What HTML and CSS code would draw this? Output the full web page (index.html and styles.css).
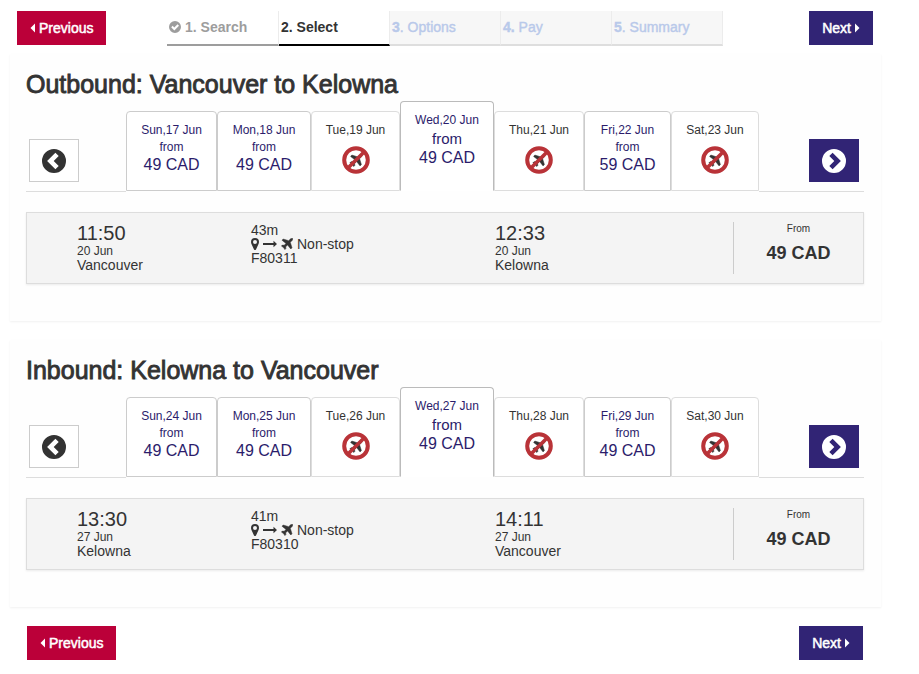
FILE: index.html
```html
<!DOCTYPE html>
<html lang="en">
<head>
<meta charset="utf-8">
<meta name="viewport" content="width=device-width, initial-scale=1">
<title>Select flights</title>
<link rel="stylesheet" href="styles.css">
</head>
<body>
<svg class="sprite" aria-hidden="true">
  <symbol id="caret-left" viewBox="0 0 5 10"><path d="M5 0.5V9.5L0.5 5z"/></symbol>
  <symbol id="caret-right" viewBox="0 0 5 10"><path d="M0 0.5V9.5L4.5 5z"/></symbol>
  <symbol id="check" viewBox="0 0 12 12"><path fill-rule="evenodd" d="M6 0a6 6 0 1 1 0 12A6 6 0 0 1 6 0zM2.2 6.3l3.1 3.1 4.7-4.7-1.5-1.5-3.2 3.2-1.6-1.6z"/></symbol>
  <symbol id="chevron-left" viewBox="0 0 24 24"><path fill-rule="evenodd" d="M12 0a12 12 0 1 1 0 24A12 12 0 0 1 12 0zM5.1 12l8.300 8.300 3.300-3.300-5-5 5-5-3.300-3.300z"/></symbol>
  <symbol id="chevron-right" viewBox="0 0 24 24"><path fill-rule="evenodd" d="M12 0a12 12 0 1 1 0 24A12 12 0 0 1 12 0zM18.900 12l-8.300 8.300-3.300-3.300 5-5-5-5 3.300-3.300z"/></symbol>
  <symbol id="plane" viewBox="0 0 12 12"><path stroke="currentColor" stroke-width=".5" stroke-linejoin="round" d="M11.600.4c.4.6 0 1.600-.7 2.300L9.300 4.300 11 9.800 9.800 11 6.600 7 4.700 8.800l.2 1.800-1 1-1.400-2.100L.4 8.100l1-1 1.800.2L5 5.400 1 2.200 2.200 1l5.500 1.700L9.300 1.100C10 .4 11 0 11.600.4z"/></symbol>
  <symbol id="pin" viewBox="0 0 8 12"><path fill-rule="evenodd" d="M4 0a4 4 0 0 1 4 4c0 1-.3 1.700-.7 2.500L5 11.500q-1 1-2 0L.7 6.500C.3 5.700 0 5 0 4a4 4 0 0 1 4-4zM4 2a2 2 0 1 0 0 4 2 2 0 0 0 0-4z"/></symbol>
  <symbol id="arrow" viewBox="0 0 14 8"><path d="M0 3.100h10.500V.8l3.500 3.200-3.500 3.200V4.900H0z"/></symbol>
  <symbol id="no-flight" viewBox="0 0 28 28">
    <path fill="#333" stroke="#333" stroke-width=".5" transform="translate(7.500 8) scale(1.080)" d="M11.600.4c.4.6 0 1.600-.7 2.300L9.300 4.300 11 9.800 9.800 11 6.600 7 4.700 8.800l.2 1.800-1 1-1.400-2.100L.4 8.100l1-1 1.800.2L5 5.400 1 2.200 2.200 1l5.500 1.700L9.300 1.100C10 .4 11 0 11.600.4z"/>
    <circle cx="14" cy="14" r="11.800" fill="none" stroke="#b93338" stroke-width="4"/>
    <path d="M5.700 22.300L22.300 5.700" stroke="#b93338" stroke-width="3.600"/>
  </symbol>
</svg>

<div class="page">
  <header class="topbar">
    <div><button class="btn btn-prev" type="button"><svg class="caret"><use href="#caret-left"/></svg>Previous</button></div>
    <ol class="steps">
      <li class="step done"><svg class="tick"><use href="#check"/></svg>1. Search</li>
      <li class="step current" aria-current="step">2. Select</li>
      <li class="step"><b>3</b>. Options</li>
      <li class="step"><b>4.</b> Pay</li>
      <li class="step"><b>5</b>. Summary</li>
    </ol>
    <div class="end"><button class="btn btn-next" type="button">Next<svg class="caret"><use href="#caret-right"/></svg></button></div>
  </header>

  <main>
    <section class="leg">
      <h2>Outbound: Vancouver to Kelowna</h2>
      <div class="dates">
        <div class="side"><button class="arrow-btn" type="button" aria-label="Earlier dates"><svg><use href="#chevron-left"/></svg></button></div>
        <div class="tabs">
          <button class="tab" type="button"><span>Sun,17 Jun</span><span class="from">from</span><span class="fare">49 CAD</span></button>
          <button class="tab" type="button"><span>Mon,18 Jun</span><span class="from">from</span><span class="fare">49 CAD</span></button>
          <button class="tab none" type="button"><span>Tue,19 Jun</span><svg><use href="#no-flight"/></svg></button>
          <button class="tab selected" type="button"><span>Wed,20 Jun</span><span class="from">from</span><span class="fare">49 CAD</span></button>
          <button class="tab none" type="button"><span>Thu,21 Jun</span><svg><use href="#no-flight"/></svg></button>
          <button class="tab" type="button"><span>Fri,22 Jun</span><span class="from">from</span><span class="fare">59 CAD</span></button>
          <button class="tab none" type="button"><span>Sat,23 Jun</span><svg><use href="#no-flight"/></svg></button>
        </div>
        <div class="side end"><button class="arrow-btn later" type="button" aria-label="Later dates"><svg><use href="#chevron-right"/></svg></button></div>
      </div>
      <article class="flight">
        <div class="stop"><div class="time">11:50</div><div class="day">20 Jun</div><div>Vancouver</div></div>
        <div class="info"><div>43m</div><div class="route"><svg class="pin"><use href="#pin"/></svg><svg class="arrow"><use href="#arrow"/></svg><svg class="plane"><use href="#plane"/></svg>Non-stop</div><div>F80311</div></div>
        <div class="stop"><div class="time">12:33</div><div class="day">20 Jun</div><div>Kelowna</div></div>
        <div class="price"><span>From</span><strong>49 CAD</strong></div>
      </article>
    </section>

    <section class="leg">
      <h2>Inbound: Kelowna to Vancouver</h2>
      <div class="dates">
        <div class="side"><button class="arrow-btn" type="button" aria-label="Earlier dates"><svg><use href="#chevron-left"/></svg></button></div>
        <div class="tabs">
          <button class="tab" type="button"><span>Sun,24 Jun</span><span class="from">from</span><span class="fare">49 CAD</span></button>
          <button class="tab" type="button"><span>Mon,25 Jun</span><span class="from">from</span><span class="fare">49 CAD</span></button>
          <button class="tab none" type="button"><span>Tue,26 Jun</span><svg><use href="#no-flight"/></svg></button>
          <button class="tab selected" type="button"><span>Wed,27 Jun</span><span class="from">from</span><span class="fare">49 CAD</span></button>
          <button class="tab none" type="button"><span>Thu,28 Jun</span><svg><use href="#no-flight"/></svg></button>
          <button class="tab" type="button"><span>Fri,29 Jun</span><span class="from">from</span><span class="fare">49 CAD</span></button>
          <button class="tab none" type="button"><span>Sat,30 Jun</span><svg><use href="#no-flight"/></svg></button>
        </div>
        <div class="side end"><button class="arrow-btn later" type="button" aria-label="Later dates"><svg><use href="#chevron-right"/></svg></button></div>
      </div>
      <article class="flight">
        <div class="stop"><div class="time">13:30</div><div class="day">27 Jun</div><div>Kelowna</div></div>
        <div class="info"><div>41m</div><div class="route"><svg class="pin"><use href="#pin"/></svg><svg class="arrow"><use href="#arrow"/></svg><svg class="plane"><use href="#plane"/></svg>Non-stop</div><div>F80310</div></div>
        <div class="stop"><div class="time">14:11</div><div class="day">27 Jun</div><div>Vancouver</div></div>
        <div class="price"><span>From</span><strong>49 CAD</strong></div>
      </article>
    </section>
  </main>

  <footer class="bottombar">
    <button class="btn btn-prev" type="button"><svg class="caret"><use href="#caret-left"/></svg>Previous</button>
    <button class="btn btn-next" type="button">Next<svg class="caret"><use href="#caret-right"/></svg></button>
  </footer>
</div>
</body>
</html>
```
FILE: styles.css
```css
* { box-sizing: border-box; }

body {
  margin: 0;
  background: #fff;
  color: #333;
  font: 14px/14px "Liberation Sans", Arial, sans-serif;
}

svg { display: block; fill: currentColor; }
.sprite { display: none; }

button {
  margin: 0;
  font: inherit;
  cursor: pointer;
}

.page { padding: 11px 38px 14px 10px; }
.end { display: flex; justify-content: flex-end; }

/* Buttons */
.btn {
  display: flex;
  align-items: center;
  gap: 4px;
  height: 34px;
  padding: 0 13px;
  border: 0;
  color: #fff;
  -webkit-text-stroke: 0.5px currentColor;
}
.btn-prev { background: #bb0039; }
.btn-next { background: #312475; }
.caret { width: 5px; height: 10px; stroke: none; }

/* Progress */
.topbar {
  display: grid;
  grid-template-columns: 150px 1fr 150px;
  padding: 0 8px 0 7px;
}
.steps {
  display: grid;
  grid-template-columns: 112fr 111fr 111fr 111fr 111fr;
  margin: 0;
  padding: 0;
  list-style: none;
}
.step {
  display: flex;
  height: 35px;
  padding: 9px 2px 0;
  border-right: 1px solid #ececec;
  border-bottom: 2px solid #dedede;
  background: #f7f7f7;
  color: #b9c9ea;
  white-space: pre;
  -webkit-text-stroke: 0.4px currentColor;
}
.step.done,
.step.current {
  background: #fff;
  font-weight: bold;
  -webkit-text-stroke: 0;
}
.step.done { color: #9d9d9d; border-bottom-color: #9d9d9d; }
.step.current { color: #333; border-bottom-color: #000; }
.tick { width: 12px; height: 12px; margin: 1px 4px 0 0; }

/* Flight legs */
.leg {
  margin: 8px 0 19px;
  padding: 17px 17px 37px 16px;
  background: #fefefe;
  box-shadow: 0 1px 2px rgba(0, 0, 0, 0.06);
}
h2 {
  margin: 0 0 4px;
  font-size: 25px;
  line-height: 26px;
  font-weight: normal;
  -webkit-text-stroke: 0.9px currentColor;
}

.dates {
  display: grid;
  grid-template-columns: 100px 1fr 105px;
}
.side {
  padding: 38px 5px 0 3px;
  border-bottom: 1px solid #ddd;
}
.arrow-btn {
  display: grid;
  place-items: center;
  width: 50px;
  height: 43px;
  padding: 0;
  border: 1px solid #ccc;
  background: #fff;
  color: #333;
}
.arrow-btn svg { width: 24px; height: 24px; }
.arrow-btn.later {
  border-color: #312475;
  background: #312475;
  color: #fff;
}

.tabs {
  display: grid;
  grid-template-columns: 91fr 94fr 89fr 94fr 90fr 87fr 88fr;
  align-items: end;
  padding-bottom: 1px;
}
.tab {
  display: flex;
  flex-direction: column;
  align-items: center;
  height: 80px;
  padding: 10px 0 0;
  border: 1px solid #ccc;
  border-radius: 4px 4px 0 0;
  background: #fff;
  color: #2b1c6b;
  font-size: 12px;
  line-height: 17px;
}
.tab .fare { font-size: 16px; line-height: 18px; }
.tab.none { border-color: #ddd; color: #333; }
.tab.none svg { width: 28px; height: 28px; margin-top: 7px; }
.tab.selected {
  height: 90px;
  border-color: #bbb;
  border-bottom-color: transparent;
}
.tab.selected .from { font-size: 15px; line-height: 20px; }

.flight {
  display: grid;
  grid-template-columns: 174fr 244fr 238fr 130px;
  margin-top: 20px;
  padding: 9px 0 9px 50px;
  border: 1px solid #ddd;
  background: #f4f4f4;
  box-shadow: 0 1px 2px rgba(0, 0, 0, 0.08);
}
.time { font-size: 20px; line-height: 22px; }
.day { font-size: 12px; }
.info { padding-top: 1px; }
.route { display: flex; align-items: center; }
.pin { width: 8px; height: 12px; margin-right: 4px; }
.arrow { width: 14px; height: 8px; margin-right: 4px; }
.plane { width: 12px; height: 12px; margin-right: 4px; }
.price {
  display: flex;
  flex-direction: column;
  align-items: center;
  height: 52px;
  border-left: 1px solid #ccc;
  font-size: 10px;
}
.price strong { margin-top: 7px; font-size: 18px; line-height: 20px; }

.bottombar {
  display: flex;
  justify-content: space-between;
  padding: 0 18px 0 17px;
}
```
